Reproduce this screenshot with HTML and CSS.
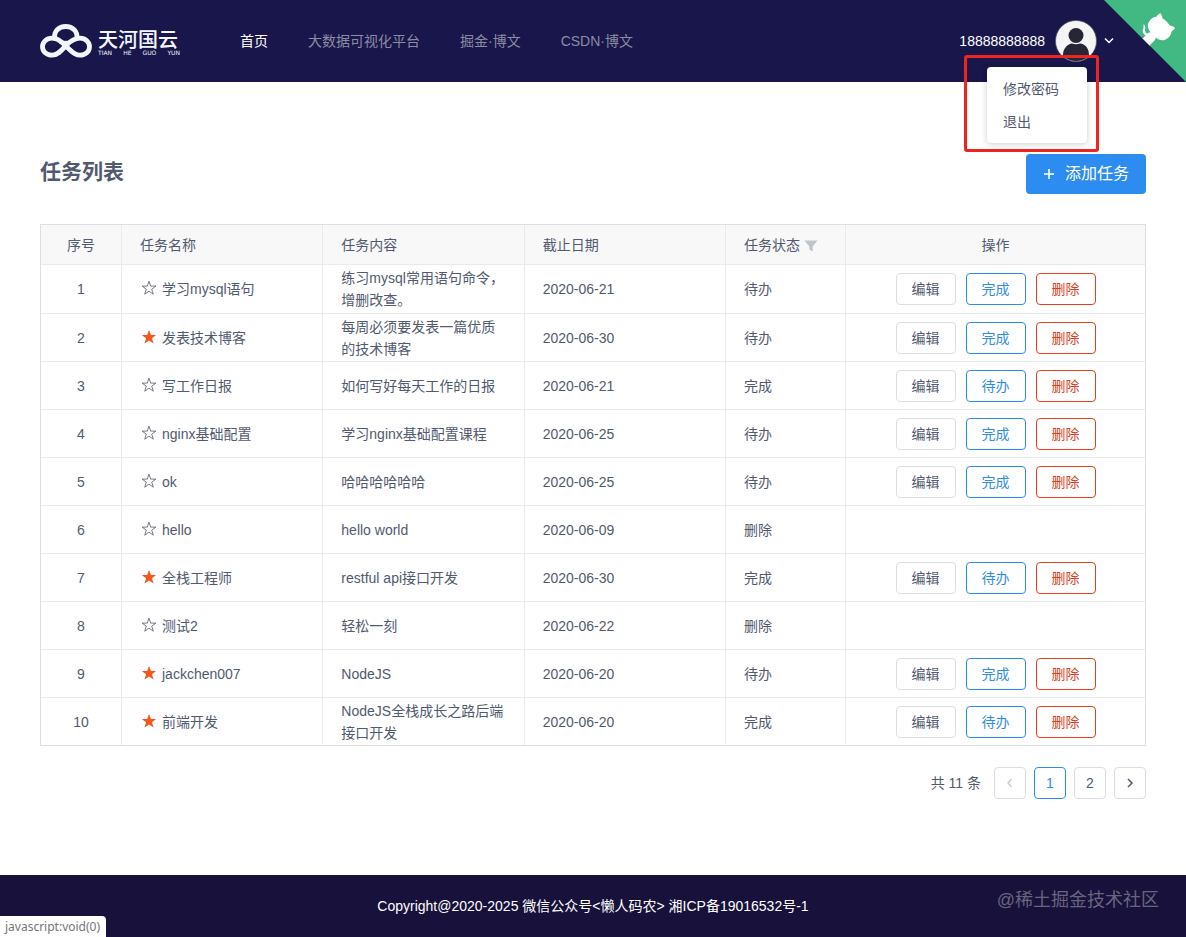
FILE: index.html
```html
<!DOCTYPE html>
<html lang="zh-CN">
<head>
<meta charset="utf-8">
<meta name="viewport" content="width=device-width, initial-scale=1">
<title>任务列表</title>
<link rel="stylesheet" href="styles.css">
</head>
<body>
<svg class="sprite" aria-hidden="true">
  <symbol id="star-o" viewBox="0 0 16 16"><path d="M8 1.2 9.7 6.1H14.9L10.7 9.2 12.3 14.2 8 11.2 3.7 14.2 5.3 9.2 1.1 6.1H6.3Z" fill="none" stroke="currentColor" stroke-width=".8"/></symbol>
  <symbol id="star" viewBox="0 0 16 16"><path d="M8 .8 9.9 6H15.2L11 9.2 12.5 14.6 8 11.4 3.5 14.6 5 9.2.8 6H6.1Z" fill="currentColor"/></symbol>
</svg>
<header class="header">
  <a class="logo" href="#" aria-label="天河国云">
    <svg class="logo-mark" viewBox="0 0 52 34" fill="none" stroke="#f4f6ff" stroke-width="4.800" stroke-linejoin="round">
      <path d="M14.800 14.500C13.500 7 19 2.500 25.700 2.500C32.400 2.500 38 7 36.800 14.500"/>
      <path d="M26 21.500C22 26 18 31.200 12 31.200C6.500 31.200 2.500 27.500 2.500 22.700C2.500 18 6.500 14.200 12 14.200C16.500 14.200 19 16 21.500 18L29.500 25.500C32.500 28.500 35.500 31.200 40 31.200C45.500 31.200 49.500 27.500 49.500 22.700C49.500 18 45.500 14.200 40 14.200C34 14.200 30 17.500 26 21.500Z"/>
      <path d="M19 18.200H29" stroke-width="2.800"/>
    </svg>
    <span class="logo-text">
      <span class="logo-cn">天河国云</span>
      <span class="logo-en"><span>TIAN</span><span>HE</span><span>GUO</span><span>YUN</span></span>
    </span>
  </a>
  <nav class="nav">
    <a class="active" href="#">首页</a>
    <a href="#">大数据可视化平台</a>
    <a href="#">掘金·博文</a>
    <a href="#">CSDN·博文</a>
  </nav>
  <div class="user">
    <span class="phone">18888888888</span>
    <svg class="avatar" viewBox="0 0 42 42"><defs><clipPath id="round"><circle cx="21" cy="21" r="20"/></clipPath></defs><circle cx="21" cy="21" r="20.500" fill="#f5f5f5"/><g clip-path="url(#round)" fill="#262637"><circle cx="21" cy="15.500" r="7.500"/><path d="M8 42V35C8 28 13 24 17 23.500Q21 25 25 23.500C30 24 34 28 34 35V42Z"/></g><circle cx="21" cy="21" r="20.500" fill="none" stroke="#55556b" stroke-width=".7"/></svg>
    <svg class="caret" viewBox="0 0 10 10" fill="none" stroke="#fff" stroke-width="1.500"><path d="M1 2.500 5 6.500 9 2.500"/></svg>
    <div class="highlight"></div>
    <div class="menu">
      <button type="button">修改密码</button>
      <button type="button">退出</button>
    </div>
  </div>
  <a class="corner" href="#" aria-label="GitHub">
    <svg viewBox="0 0 250 250"><path fill="#42b983" d="M0,0 L115,115 L130,115 L142,142 L250,250 L250,0 Z"/><path fill="#fff" d="M128.3,109.0 C113.8,99.7 119.0,89.6 119.0,89.6 C122.0,82.7 120.5,78.6 120.5,78.6 C119.2,72.0 123.4,76.3 123.4,76.3 C127.3,80.9 125.5,87.3 125.5,87.3 C122.9,97.6 130.6,101.9 134.4,103.2"/><path fill="#fff" d="M115.0,115.0 C114.9,115.1 118.7,116.5 119.8,115.4 L133.7,101.6 C136.9,99.2 139.9,98.4 142.2,98.6 C133.8,88.0 127.5,74.4 143.8,58.0 C148.5,53.4 154.0,51.2 159.7,51.0 C160.3,49.4 163.2,43.6 171.4,40.1 C171.4,40.1 176.1,42.5 178.8,56.2 C183.1,58.6 187.2,61.8 190.9,65.4 C194.5,69.0 197.7,73.2 200.1,77.6 C213.8,80.2 216.3,84.9 216.3,84.9 C212.7,93.1 206.9,96.0 205.4,96.6 C205.1,102.4 203.0,107.8 198.3,112.5 C181.9,128.9 168.3,122.5 157.7,114.1 C157.9,116.9 156.7,120.9 152.7,124.9 L141.0,136.5 C139.8,137.7 141.6,141.9 141.8,141.8 Z"/></svg>
  </a>
</header>
<main class="main">
  <div class="title-row">
    <h1>任务列表</h1>
    <button class="add" type="button"><svg viewBox="0 0 12 12" stroke="#fff" stroke-width="1.600"><path d="M6 1V11M1 6H11"/></svg>添加任务</button>
  </div>
  <table class="tasks">
    <colgroup><col class="c-no"><col><col><col><col class="c-state"><col class="c-ops"></colgroup>
    <thead><tr><th class="center">序号</th><th>任务名称</th><th>任务内容</th><th>截止日期</th><th>任务状态<svg class="filter" viewBox="0 0 14 12"><path d="M.5 .5H13.500L8.700 6.500V11.500L5.300 9.500V6.500Z" fill="#c0c4cc"/></svg></th><th class="center">操作</th></tr></thead>
    <tbody>
      <tr><td class="center">1</td><td><svg class="star"><use href="#star-o"/></svg>学习mysql语句</td><td>练习mysql常用语句命令，增删改查。</td><td>2020-06-21</td><td>待办</td><td><div class="ops"><button type="button">编辑</button><button type="button" class="blue">完成</button><button type="button" class="red">删除</button></div></td></tr>
      <tr><td class="center">2</td><td><svg class="star on"><use href="#star"/></svg>发表技术博客</td><td>每周必须要发表一篇优质的技术博客</td><td>2020-06-30</td><td>待办</td><td><div class="ops"><button type="button">编辑</button><button type="button" class="blue">完成</button><button type="button" class="red">删除</button></div></td></tr>
      <tr><td class="center">3</td><td><svg class="star"><use href="#star-o"/></svg>写工作日报</td><td>如何写好每天工作的日报</td><td>2020-06-21</td><td>完成</td><td><div class="ops"><button type="button">编辑</button><button type="button" class="blue">待办</button><button type="button" class="red">删除</button></div></td></tr>
      <tr><td class="center">4</td><td><svg class="star"><use href="#star-o"/></svg>nginx基础配置</td><td>学习nginx基础配置课程</td><td>2020-06-25</td><td>待办</td><td><div class="ops"><button type="button">编辑</button><button type="button" class="blue">完成</button><button type="button" class="red">删除</button></div></td></tr>
      <tr><td class="center">5</td><td><svg class="star"><use href="#star-o"/></svg>ok</td><td>哈哈哈哈哈哈</td><td>2020-06-25</td><td>待办</td><td><div class="ops"><button type="button">编辑</button><button type="button" class="blue">完成</button><button type="button" class="red">删除</button></div></td></tr>
      <tr><td class="center">6</td><td><svg class="star"><use href="#star-o"/></svg>hello</td><td>hello world</td><td>2020-06-09</td><td>删除</td><td></td></tr>
      <tr><td class="center">7</td><td><svg class="star on"><use href="#star"/></svg>全栈工程师</td><td>restful api接口开发</td><td>2020-06-30</td><td>完成</td><td><div class="ops"><button type="button">编辑</button><button type="button" class="blue">待办</button><button type="button" class="red">删除</button></div></td></tr>
      <tr><td class="center">8</td><td><svg class="star"><use href="#star-o"/></svg>测试2</td><td>轻松一刻</td><td>2020-06-22</td><td>删除</td><td></td></tr>
      <tr><td class="center">9</td><td><svg class="star on"><use href="#star"/></svg>jackchen007</td><td>NodeJS</td><td>2020-06-20</td><td>待办</td><td><div class="ops"><button type="button">编辑</button><button type="button" class="blue">完成</button><button type="button" class="red">删除</button></div></td></tr>
      <tr><td class="center">10</td><td><svg class="star on"><use href="#star"/></svg>前端开发</td><td>NodeJS全栈成长之路后端接口开发</td><td>2020-06-20</td><td>完成</td><td><div class="ops"><button type="button">编辑</button><button type="button" class="blue">待办</button><button type="button" class="red">删除</button></div></td></tr>
    </tbody>
  </table>
  <div class="pager">
    <span class="total">共 11 条</span>
    <button type="button" disabled aria-label="上一页"><svg viewBox="0 0 10 10" fill="none" stroke="#c5c8ce" stroke-width="1.300"><path d="M6.500 1 3 5 6.500 9"/></svg></button>
    <button type="button" class="current">1</button>
    <button type="button">2</button>
    <button type="button" aria-label="下一页"><svg viewBox="0 0 10 10" fill="none" stroke="#515a6e" stroke-width="1.500"><path d="M3 1 7 5 3 9"/></svg></button>
  </div>
</main>
<footer class="footer">
  <span>Copyright@2020-2025 微信公众号&lt;懒人码农&gt; 湘ICP备19016532号-1</span>
  <span class="watermark">@稀土掘金技术社区</span>
</footer>
<div class="status">javascript:void(0)</div>
</body>
</html>
```
FILE: styles.css
```css
* {
  box-sizing: border-box;
}

body {
  margin: 0;
  min-height: 100vh;
  display: flex;
  flex-direction: column;
  background: #fff;
  color: #515a6e;
  font: 14px/22px "Liberation Sans", "Noto Sans CJK SC", sans-serif;
}

button {
  font: inherit;
  color: inherit;
  margin: 0;
  padding: 0;
  background: #fff;
  border: 1px solid #dcdee2;
  border-radius: 4px;
}

a {
  text-decoration: none;
  color: inherit;
}

.sprite {
  position: absolute;
  width: 0;
  height: 0;
}

.header {
  position: relative;
  display: flex;
  align-items: center;
  height: 82px;
  padding: 0 72px 0 40px;
  background: #18164a;
  color: #fff;
}

.logo {
  display: flex;
  align-items: center;
  gap: 6px;
  width: 140px;
  color: #f4f6ff;
}

.logo-mark {
  width: 52px;
  height: 34px;
}

.logo-text {
  flex: 1;
  display: flex;
  flex-direction: column;
  padding-top: 6px;
}

.logo-cn {
  font-size: 20px;
  line-height: 18px;
  font-weight: 500;
}

.logo-en {
  display: flex;
  justify-content: space-between;
  font: 6px/8px "DejaVu Sans", sans-serif;
}

.nav {
  display: flex;
  gap: 40px;
  margin-left: 60px;
  color: #8c8ba5;
}

.nav .active {
  color: #fff;
}

.user {
  position: relative;
  display: flex;
  align-items: center;
  margin-left: auto;
}

.avatar {
  width: 42px;
  height: 42px;
  margin: 0 7px 0 10px;
}

.caret {
  width: 10px;
  height: 10px;
}

.highlight {
  position: absolute;
  top: 35px;
  right: 15px;
  width: 135px;
  height: 97px;
  border: 3px solid #ed2420;
  border-radius: 3px;
}

.menu {
  position: absolute;
  top: 47px;
  right: 27px;
  width: 100px;
  padding: 6px 0 4px;
  background: #fff;
  border-radius: 4px;
  box-shadow: 0 1px 6px rgba(0, 0, 0, 0.2);
  color: #515a6e;
}

.menu button {
  display: block;
  width: 100%;
  padding: 7px 16px;
  border: 0;
  background: none;
  line-height: 19px;
  text-align: left;
}

.corner {
  position: absolute;
  top: 0;
  right: 0;
}

.corner svg {
  display: block;
  width: 82px;
  height: 82px;
}

.main {
  flex: 1;
  padding: 72px 40px 0;
}

.title-row {
  display: flex;
  justify-content: space-between;
  margin-bottom: 30px;
}

h1 {
  margin: 0;
  font-size: 21px;
  line-height: 36px;
}

.add {
  display: flex;
  align-items: center;
  justify-content: center;
  gap: 10px;
  width: 120px;
  height: 40px;
  border: 0;
  background: #2d8cf0;
  color: #fff;
  font-size: 16px;
}

.add svg {
  width: 12px;
  height: 12px;
}

.tasks {
  width: 100%;
  table-layout: fixed;
  border-collapse: separate;
  border-spacing: 0;
  border: 1px solid #dcdee2;
  border-width: 1px 0 0 1px;
}

.c-no {
  width: 81px;
}

.c-state {
  width: 120px;
}

.c-ops {
  width: 300px;
}

th,
td {
  height: 48px;
  padding: 0 18px;
  border: 1px solid #e8eaec;
  border-width: 0 1px 1px 0;
  text-align: left;
  font-weight: 400;
}

th {
  height: 40px;
  background: #f8f8f9;
}

tbody tr:first-child td {
  height: 49px;
}

th:last-child,
td:last-child {
  border-right-color: #dcdee2;
}

tbody tr:last-child td {
  border-bottom-color: #dcdee2;
}

.center {
  text-align: center;
}

.filter {
  width: 14px;
  height: 12px;
  margin-left: 4px;
  vertical-align: -2px;
}

.star {
  width: 16px;
  height: 16px;
  margin: 0 5px 0 1px;
  vertical-align: -2px;
}

.star.on {
  color: #f9581c;
}

.ops {
  display: flex;
  justify-content: center;
  gap: 10px;
}

.ops button {
  width: 60px;
  height: 32px;
}

.ops .blue,
.pager .current {
  color: #2d8cf0;
  border-color: #2d8cf0;
}

.ops .red {
  color: #e2401c;
  border-color: #e2401c;
}

.pager {
  display: flex;
  align-items: center;
  justify-content: flex-end;
  gap: 8px;
  margin-top: 21px;
}

.total {
  margin-right: 5px;
}

.pager button {
  width: 32px;
  height: 32px;
}

.pager svg {
  width: 10px;
  height: 10px;
}

.footer {
  position: relative;
  padding: 20px 40px;
  background: #17113b;
  color: #fff;
  text-align: center;
}

.watermark {
  position: absolute;
  right: 27px;
  top: 12px;
  font-size: 18px;
  line-height: 26px;
  color: #69657f;
}

.status {
  position: fixed;
  left: 0;
  bottom: 0;
  padding: 0 6px 0 5px;
  background: #fff;
  border-top-right-radius: 4px;
  color: #73767a;
  font: 12px/21px "Noto Sans", sans-serif;
}
```
